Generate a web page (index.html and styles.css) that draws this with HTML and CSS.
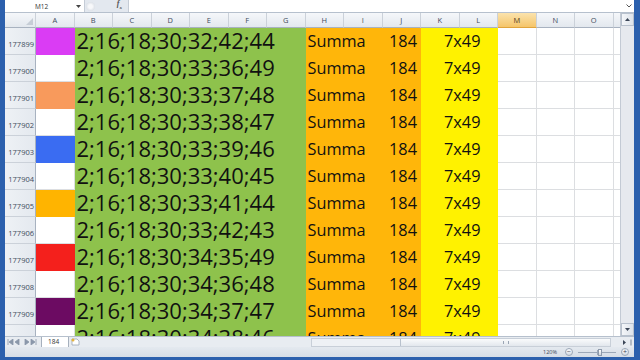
FILE: index.html
```html
<!DOCTYPE html>
<html lang="en">
  <head>
    <meta charset="utf-8" />
    <meta name="viewport" content="width=device-width, initial-scale=1" />
    <title>184 - Excel</title>
    <link rel="stylesheet" href="styles.css">
    <script type="text/javascript">
      // one entry per sheet row: row number, fill of column A, combination
      const rows = [
        ['177899', 'magenta', '2;16;18;30;32;42;44'],
        ['177900', 'blank', '2;16;18;30;33;36;49'],
        ['177901', 'peach', '2;16;18;30;33;37;48'],
        ['177902', 'blank', '2;16;18;30;33;38;47'],
        ['177903', 'blue', '2;16;18;30;33;39;46'],
        ['177904', 'blank', '2;16;18;30;33;40;45'],
        ['177905', 'amber', '2;16;18;30;33;41;44'],
        ['177906', 'blank', '2;16;18;30;33;42;43'],
        ['177907', 'red', '2;16;18;30;34;35;49'],
        ['177908', 'blank', '2;16;18;30;34;36;48'],
        ['177909', 'purple', '2;16;18;30;34;37;47'],
        ['177910', 'blank', '2;16;18;30;34;38;46']
      ]
      // the last column only peeks in at the right edge, so no letter for it
      const letters = ['A', 'B', 'C', 'D', 'E', 'F', 'G', 'H', 'I', 'J', 'K', 'L', 'M', 'N', 'O', '']

      document.addEventListener('DOMContentLoaded', function () {
        const sheet = document.getElementById('sheet')

        // column headers
        sheet.appendChild(makeCell('corner', ''))
        letters.forEach(function (l) {
          sheet.appendChild(makeCell(l === 'M' ? 'col-head active' : 'col-head', l))
        })

        rows.forEach(function (r) {
          sheet.appendChild(makeCell('row-head', r[0]))
          sheet.appendChild(makeCell('cell fill-' + r[1], ''))
          sheet.appendChild(makeCell('cell combo', r[2]))
          const sum = makeCell('cell summa', '')
          sum.appendChild(makeCell('label', 'Summa'))
          sum.appendChild(makeCell('total', '184'))
          sheet.appendChild(sum)
          sheet.appendChild(makeCell('cell groups', '7x49'))
          // empty columns M to P
          for (let i = 0; i < 4; i++) {
            sheet.appendChild(makeCell('cell fill-blank', ''))
          }
        })
      })

      function makeCell(cls, text) {
        const d = document.createElement('DIV')
        d.className = cls
        if (text) d.appendChild(document.createTextNode(text))
        return d
      }
    </script>
  </head>
  <body>
    <div class="window">
      <div class="formula-bar">
        <div class="name-box">
          <span>M12</span>
          <svg class="drop" width="5" height="3" viewBox="0 0 5 3"><path d="M0 0h5L2.5 3z" fill="#444"/></svg>
        </div>
        <div class="fx-area">
          <span class="grip"></span>
          <span class="fx">f<sub>x</sub></span>
        </div>
        <div class="formula-input">
          <svg class="expand" width="6" height="4" viewBox="0 0 6 4"><path d="M0.5 0.5L3 3 5.5 0.5" stroke="#555" fill="none"/></svg>
        </div>
      </div>

      <div class="main">
        <div class="sheet" id="sheet"></div>
        <div class="vscroll">
          <div class="vbtn"><svg width="5" height="3" viewBox="0 0 5 3"><path d="M0 3h5L2.5 0z" fill="#3b4657"/></svg></div>
          <div class="vtrack"></div>
          <div class="vbtn"><svg width="5" height="3" viewBox="0 0 5 3"><path d="M0 0h5L2.5 3z" fill="#3b4657"/></svg></div>
        </div>
      </div>

      <div class="tab-bar">
        <div class="tab-nav">
          <svg width="32" height="6" viewBox="0 0 32 6">
            <path d="M2 0v6M7 0L3 3l4 3z M13 0L9 3l4 3z M19 0l4 3-4 3z M25 0l4 3-4 3z M30 0v6" stroke="#8a97aa" stroke-width="0.8" fill="#8a97aa"/>
          </svg>
        </div>
        <div class="tab">184</div>
        <div class="new-sheet">
          <svg width="9" height="8" viewBox="0 0 9 8"><path d="M1 1h5l2 2v4H1z" fill="#fff" stroke="#9aa6b6" stroke-width="0.8"/><circle cx="2" cy="2" r="1.5" fill="#e6b33c"/></svg>
        </div>
        <div class="tab-gap"></div>
        <div class="hscroll">
          <div class="hthumb"><span class="hgrip"></span></div>
        </div>
        <div class="hend">
          <svg width="12" height="7" viewBox="0 0 12 7"><path d="M1 1l3 2.5L1 6z" fill="#3b4657"/><path d="M9 0.5v6" stroke="#7f8a99"/></svg>
        </div>
      </div>

      <div class="status-bar">
        <span class="zoom-level">120%</span>
        <span class="zoom-btn">&minus;</span>
        <span class="slider"><span class="tick"></span><span class="knob"></span></span>
        <span class="zoom-btn">+</span>
      </div>
    </div>
  </body>
</html>
```

FILE: styles.css
```css
* {
  box-sizing: border-box;
}

body {
  margin: 0;
  width: 640px;
  height: 360px;
  overflow: hidden;
  background-color: #2c60ad;
  font-family: "Open Sans", "Noto Sans", sans-serif;
}

.window {
  width: 640px;
  height: 360px;
  display: flex;
  flex-direction: column;
  padding: 0 6px 3px 5px;
}

/* formula bar */
.formula-bar {
  flex: none;
  height: 13px;
  display: flex;
  background-color: #e3e8ef;
  border-bottom: 1px solid #b6c0cd;
}

.name-box {
  width: 80px;
  display: flex;
  align-items: center;
  background-color: #fff;
  border-right: 1px solid #c5ccd6;
  padding-left: 30px;
  font-size: 6.5px;
  color: #333;
}

.name-box .drop {
  margin-left: auto;
  margin-right: 3px;
}

.fx-area {
  width: 43px;
  display: flex;
  align-items: center;
  padding-left: 1px;
}

.grip {
  width: 9px;
  height: 9px;
  border-radius: 50%;
  background: radial-gradient(circle, #f7f8fa 30%, #c9d0da 100%);
}

.fx {
  margin-left: auto;
  margin-right: 6px;
  font-family: "Liberation Serif", serif;
  font-style: italic;
  font-weight: bold;
  font-size: 8px;
  line-height: 8px;
  color: #555;
}

.fx sub {
  font-size: 5px;
}

.formula-input {
  flex: 1;
  display: flex;
  align-items: center;
  justify-content: flex-end;
  background-color: #fff;
  border-left: 1px solid #c5ccd6;
  padding-right: 2px;
}

/* grid */
.main {
  flex: 1;
  display: flex;
  overflow: hidden;
}

.sheet {
  width: 615px;
  display: grid;
  grid-template-columns: 31px repeat(16, 38.5px);
  grid-template-rows: 15px;
  grid-auto-rows: 27px;
  overflow: hidden;
  background-color: #fff;
}

.corner,
.col-head {
  background: linear-gradient(#f5f7fa, #e3e8ee);
  border-right: 1px solid #cbd1d9;
  border-bottom: 1px solid #a8b2c0;
  font-size: 7.5px;
  color: #414c5c;
  text-align: center;
  line-height: 14px;
}

.corner {
  position: relative;
}

/* the little select-all triangle */
.corner::after {
  content: '';
  position: absolute;
  right: 2px;
  bottom: 2px;
  border-left: 7px solid transparent;
  border-bottom: 7px solid #c6cdd6;
}

.col-head.active {
  background: linear-gradient(#fbe3ad, #f5c56a);
  border-bottom-color: #e0a43c;
  color: #5a4420;
}

.row-head {
  background: linear-gradient(90deg, #eef1f5, #e4e9ef);
  border-right: 1px solid #a8b2c0;
  border-bottom: 1px solid #cbd1d9;
  font-size: 7.5px;
  color: #414c5c;
  text-align: right;
  padding-right: 1px;
  line-height: 32px;
}

.cell {
  line-height: 27px;
  white-space: nowrap;
  color: #111;
}

.fill-blank {
  border-right: 1px solid #dcdee1;
  border-bottom: 1px solid #dcdee1;
}

.fill-magenta { background-color: #da3cf4; }
.fill-peach { background-color: #f89a5c; }
.fill-blue { background-color: #3a6cf2; }
.fill-amber { background-color: #ffb400; }
.fill-red { background-color: #f4201c; }
.fill-purple { background-color: #6c0b62; }

.combo {
  grid-column: span 6;
  background-color: #8ec24c;
  font-size: 22px;
  padding-left: 2px;
  line-height: 25px;
}

.summa {
  grid-column: span 3;
  display: flex;
  justify-content: space-between;
  background-color: #ffb60a;
  font-size: 16.3px;
  padding: 0 4px 0 2px;
}

.groups {
  grid-column: span 2;
  background-color: #fff200;
  font-size: 16.3px;
  padding-left: 23px;
}

/* vertical scrollbar */
.vscroll {
  width: 14px;
  display: flex;
  flex-direction: column;
  background-color: #e6e9ee;
  border-left: 1px solid #c3cad4;
}

.vbtn {
  height: 13px;
  display: flex;
  align-items: center;
  justify-content: center;
  background: linear-gradient(90deg, #f4f6f9, #dde3ea);
  border: 1px solid #b8c1cd;
}

.vtrack {
  flex: 1;
}

/* sheet tabs and horizontal scrollbar */
.tab-bar {
  flex: none;
  height: 11px;
  display: flex;
  align-items: center;
  background-color: #e8ecf1;
  border-top: 1px solid #b6c0cd;
}

.tab-nav {
  width: 36px;
  display: flex;
  padding-left: 1px;
}

.tab {
  height: 11px;
  padding: 0 9px 0 6px;
  background-color: #fff;
  border: 1px solid #a6b0bd;
  border-top: none;
  font-size: 6.5px;
  line-height: 10px;
  color: #333;
}

.new-sheet {
  display: flex;
  margin-left: 2px;
}

.tab-gap {
  flex: 1;
}

.hscroll {
  width: 300px;
  height: 9px;
  display: flex;
  justify-content: flex-end;
  background-color: #eef1f5;
  border: 1px solid #c8cfd8;
}

.hthumb {
  width: 210px;
  display: flex;
  align-items: center;
  justify-content: center;
  background: linear-gradient(#fafbfc, #e2e7ed);
  border-left: 1px solid #b8c1cd;
}

.hgrip {
  width: 6px;
  height: 3px;
  border-left: 1px solid #9aa5b4;
  border-right: 1px solid #9aa5b4;
}

.hend {
  width: 23px;
  display: flex;
  justify-content: flex-end;
}

/* status bar */
.status-bar {
  flex: none;
  height: 10px;
  display: flex;
  align-items: center;
  justify-content: flex-end;
  gap: 5px;
  padding-right: 5px;
  background: linear-gradient(#e4e9ef, #d6dde6);
  font-size: 5.5px;
  line-height: 8px;
  color: #3b4657;
}

.zoom-level {
  margin-right: 3px;
}

.zoom-btn {
  width: 8px;
  height: 8px;
  border-radius: 50%;
  background: linear-gradient(#fbfcfd, #d3dae3);
  border: 1px solid #9ca8b8;
  font-size: 7px;
  line-height: 5px;
  text-align: center;
}

.slider {
  width: 38px;
  height: 7px;
  position: relative;
  background: linear-gradient(transparent 3px, #9ca8b8 3px, #9ca8b8 4px, transparent 4px);
}

.tick {
  position: absolute;
  left: 19px;
  top: 1px;
  width: 1px;
  height: 5px;
  background-color: #9ca8b8;
}

.knob {
  position: absolute;
  left: 20px;
  top: 0;
  width: 4px;
  height: 7px;
  background: linear-gradient(#fff, #cfd6df);
  border: 1px solid #8e9aab;
}
```
